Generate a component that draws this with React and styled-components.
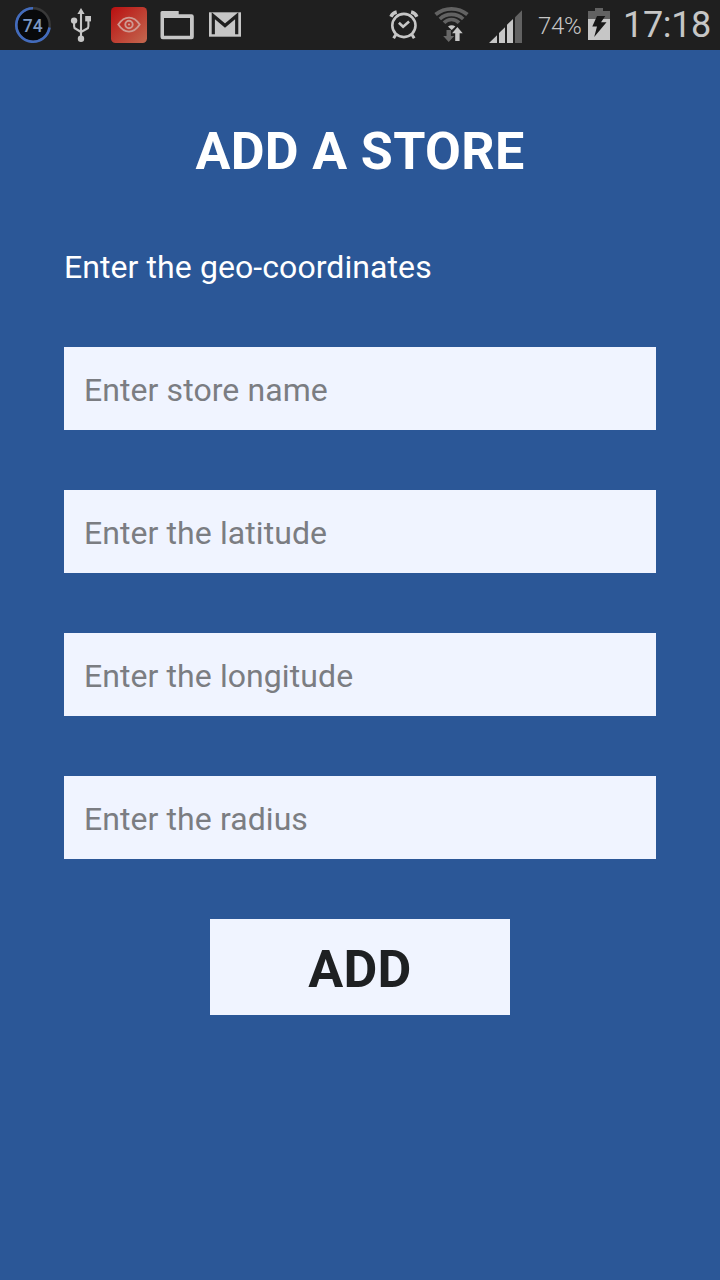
import React from 'react';
import styled, { createGlobalStyle } from 'styled-components';

const GlobalStyle = createGlobalStyle`
  * { box-sizing: border-box; }
  body {
    margin: 0;
    background: #2b5797;
    font-family: Roboto, "Liberation Sans", sans-serif;
  }
`;

const Screen = styled.div`
  width: 720px;
  height: 1280px;
  display: flex;
  flex-direction: column;
  background: #2b5797;
`;

const StatusBar = styled.header`
  display: flex;
  justify-content: space-between;
  height: 50px;
  padding: 0 10px 0 15px;
  background: #1f1f1f;
  color: #c6c6c6;
  flex: none;
`;

const StatusGroup = styled.div`
  display: flex;
  align-items: flex-start;
`;

const StatusIcon = styled.svg`
  display: block;
  flex: none;
  width: ${(p) => p.$width}px;
  height: 50px;
  margin-left: ${(p) => p.$gap || 0}px;
`;

const Percent = styled.span`
  width: 44px;
  margin-left: 16px;
  padding-top: 1px;
  font-size: 24px;
  font-weight: 350;
  line-height: 50px;
  letter-spacing: -0.3px;
  white-space: nowrap;
`;

const Clock = styled.span`
  width: 87px;
  margin-left: 13px;
  font-size: 36px;
  font-weight: 380;
  line-height: 50px;
  letter-spacing: -0.35px;
  white-space: nowrap;
`;

const Form = styled.form`
  display: flex;
  flex-direction: column;
  padding: 71px 64px 0;
`;

const Title = styled.h1`
  margin: 0;
  color: #fff;
  font-size: 52px;
  font-weight: 700;
  line-height: 62px;
  letter-spacing: 0.35px;
  text-align: center;
  white-space: nowrap;
`;

const Hint = styled.p`
  margin: 65px 0 60px;
  color: #fff;
  font-size: 32px;
  line-height: 39px;
  letter-spacing: 0.08px;
  white-space: nowrap;
`;

const Field = styled.input`
  width: 100%;
  height: 83px;
  margin: 0 0 60px;
  padding: 2px 20px 0;
  border: 0;
  border-radius: 0;
  outline: 0;
  background: #f0f4ff;
  color: #1e2022;
  font: 400 32px Roboto, "Liberation Sans", sans-serif;
  letter-spacing: 0.08px;
  &::placeholder { color: #7b7d82; opacity: 1; }
`;

const SubmitButton = styled.button`
  align-self: center;
  width: 300px;
  height: 96px;
  padding: 4px 0 0;
  border: 0;
  background: #f0f4ff;
  color: #1e2022;
  font: 700 52px Roboto, "Liberation Sans", sans-serif;
  letter-spacing: 0.3px;
`;

const UsageRing = () => (
  <StatusIcon $width={36} viewBox="0 0 36 50">
    <circle cx="18" cy="25" r="16.7" fill="#08090b" stroke="#393939" strokeWidth="2.4" />
    <path d="M18 8.3A16.7 16.7 0 1 0 34.5 27.5" fill="none" stroke="#426bbd" strokeWidth="2.6" />
    <text x="17.7" y="31.8" textAnchor="middle" fontSize="17.5" fontWeight="500" fill="#7c98c4">74</text>
  </StatusIcon>
);

const UsbIcon = () => (
  <StatusIcon $width={22} $gap={19} viewBox="0 0 22 50">
    <g fill="#c6c6c6">
      <path d="M11 8l3.6 6H7.4z" />
      <circle cx="11" cy="38.8" r="3.2" />
      <circle cx="4.1" cy="20.6" r="3.2" />
      <rect x="15.2" y="16" width="5.8" height="5.4" />
    </g>
    <path d="M11 12v25M4.1 21v5.2q0 2 1.6 2.6L11 32M18.4 20v6.2q0 2-1.6 2.6L11 32" fill="none" stroke="#c6c6c6" strokeWidth="2.1" />
  </StatusIcon>
);

const EyeAppIcon = () => (
  <StatusIcon $width={36} $gap={19} viewBox="0 0 36 50">
    <defs>
      <linearGradient id="eyeRed" x1="0" y1="0" x2="1" y2="1">
        <stop offset="0" stopColor="#b90f10" />
        <stop offset="1" stopColor="#c36950" />
      </linearGradient>
    </defs>
    <rect y="7" width="36" height="36" rx="4.5" fill="url(#eyeRed)" />
    <g fill="none" stroke="#cf9a92" strokeWidth="1.9">
      <path d="M7.3 24.5Q12 17.6 18 17.6t10.7 6.9Q24 31.6 18 31.6T7.3 24.5z" />
      <circle cx="18" cy="24.5" r="3.7" />
    </g>
    <circle cx="18" cy="24.5" r="1.1" fill="#cf9a92" />
  </StatusIcon>
);

const FolderIcon = () => (
  <StatusIcon $width={34} $gap={13} viewBox="0 0 34 50">
    <path fillRule="evenodd" fill="#c6c6c6" d="M2 11h16.7v3.3H31.5q2.3 0 2.3 2.3V37q0 2.3-2.3 2.3H2.8Q.5 39.3.5 37V12.5Q.5 11 2 11zM4 18v17.7h26V18z" />
  </StatusIcon>
);

const MailIcon = () => (
  <StatusIcon $width={34} $gap={14} viewBox="0 0 34 50">
    <rect x="1" y="12.3" width="32" height="24.4" fill="#c6c6c6" />
    <path d="M5.3 34.2V15.8L17 25.6l11.7-9.8v18.4" fill="none" stroke="#1f1f1f" strokeWidth="3.2" />
  </StatusIcon>
);

const AlarmIcon = () => (
  <StatusIcon $width={30} viewBox="0 0 30 50">
    <g fill="none" stroke="#c6c6c6" transform="translate(.9 0)">
      <circle cx="14" cy="25.5" r="11.6" strokeWidth="2.6" />
      <path d="M9 22.7l4.2 4 6-5.2" strokeWidth="2.6" />
      <path d="M1 16.7Q2.7 13 6.8 12M27 16.7Q25.3 13 21.2 12" strokeWidth="3.4" />
      <path d="M6 34.5l-2.3 3.7M22 34.5l2.3 3.7" strokeWidth="3" />
    </g>
  </StatusIcon>
);

const WifiIcon = () => (
  <StatusIcon $width={36} $gap={15} viewBox="0 0 36 50">
    <g fill="none" stroke="#626262">
      <path d="M1.6 14.6A25 25 0 0 1 33.4 14.6" strokeWidth="3.9" />
      <path d="M5.8 19A17.2 17.2 0 0 1 29.2 19" strokeWidth="3.6" />
      <path d="M10 22.8A10.2 10.2 0 0 1 25 22.8" strokeWidth="3.6" />
    </g>
    <path d="M14 26.5q3.7-2.5 7.4 0L17.7 30z" fill="#c6c6c6" />
    <path d="M12.5 30h4.4v6h3.3l-5.5 6-5.5-6h3.3z" fill="#686868" />
    <path d="M23.4 27l5.3 6.2h-3.1V41h-4.4v-7.8h-3.1z" fill="#c6c6c6" />
  </StatusIcon>
);

const SignalIcon = () => (
  <StatusIcon $width={34} $gap={18} viewBox="0 0 34 50">
    <path d="M1 43l8-7.8V43zM11 33l6-5.8V43h-6zM19 24.8l6-5.9V43h-6z" fill="#c6c6c6" />
    <path d="M27 17.3l7-7V43h-7z" fill="#626262" />
  </StatusIcon>
);

const BatteryIcon = () => (
  <StatusIcon $width={22} $gap={6} viewBox="0 0 22 50">
    <path d="M7 8h8v3h7v8.5H0V11h7z" fill="#626262" />
    <path d="M0 19h22v21H0z" fill="#c6c6c6" />
    <path d="M9 16h8.3L13 22.3h5.5L6.2 37l2.8-10.6H4.3z" fill="#171717" />
  </StatusIcon>
);

const FIELDS = [
  { name: 'store', placeholder: 'Enter store name' },
  { name: 'latitude', placeholder: 'Enter the latitude' },
  { name: 'longitude', placeholder: 'Enter the longitude' },
  { name: 'radius', placeholder: 'Enter the radius' },
];

export default function App() {
  return (
    <Screen>
      <GlobalStyle />
      <StatusBar>
        <StatusGroup>
          <UsageRing />
          <UsbIcon />
          <EyeAppIcon />
          <FolderIcon />
          <MailIcon />
        </StatusGroup>
        <StatusGroup>
          <AlarmIcon />
          <WifiIcon />
          <SignalIcon />
          <Percent>74%</Percent>
          <BatteryIcon />
          <Clock>17:18</Clock>
        </StatusGroup>
      </StatusBar>
      <Form onSubmit={(e) => e.preventDefault()}>
        <Title>ADD A STORE</Title>
        <Hint>Enter the geo-coordinates</Hint>
        {FIELDS.map((f) => (
          <Field key={f.name} name={f.name} placeholder={f.placeholder} />
        ))}
        <SubmitButton type="submit">ADD</SubmitButton>
      </Form>
    </Screen>
  );
}
